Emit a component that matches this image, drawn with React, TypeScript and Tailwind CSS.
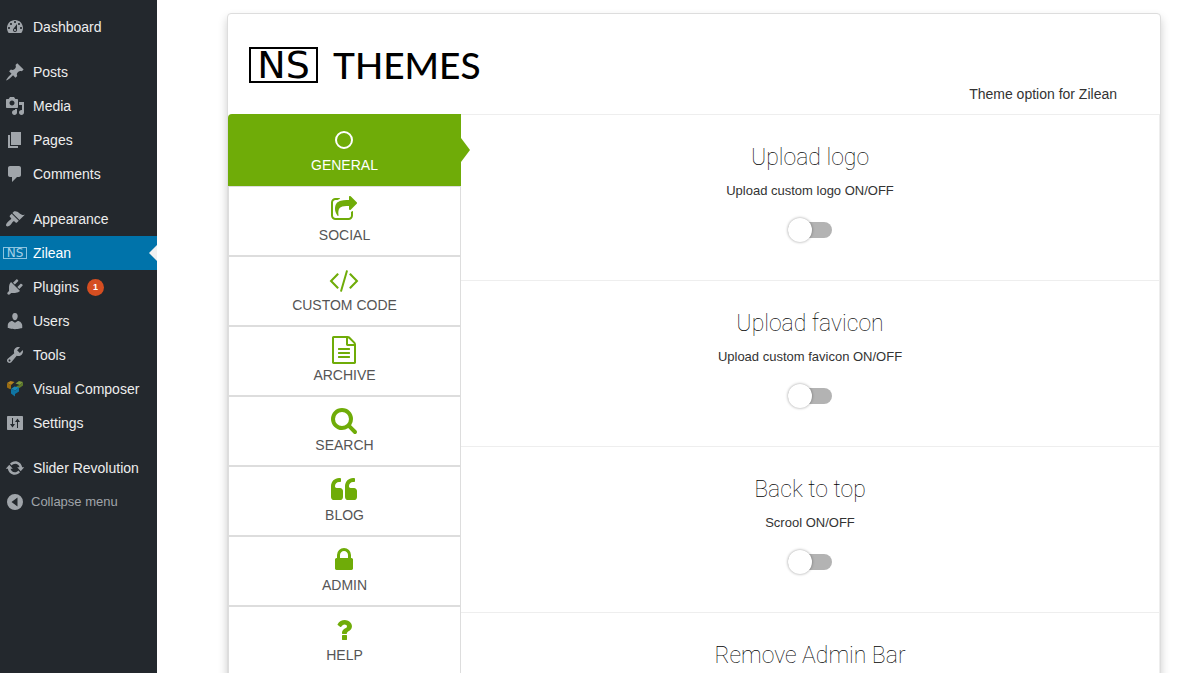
import React, { useState } from 'react';

const sans = "font-['Liberation_Sans',Arial,sans-serif]";

const menuIcons: Record<string, string> = {
  dashboard:
    'M3.76 16h12.48c1.1-1.37 1.76-3.11 1.76-5 0-4.42-3.58-8-8-8s-8 3.58-8 8c0 1.89.66 3.63 1.76 5zM10 4c.55 0 1 .45 1 1s-.45 1-1 1-1-.45-1-1 .45-1 1-1zM6 6c.55 0 1 .45 1 1s-.45 1-1 1-1-.45-1-1 .45-1 1-1zm8 0c.55 0 1 .45 1 1s-.45 1-1 1-1-.45-1-1 .45-1 1-1zm-5.37 5.55L12 7v6c0 1.1-.9 2-2 2s-2-.9-2-2c0-.57.24-1.08.63-1.45zM4 10c.55 0 1 .45 1 1s-.45 1-1 1-1-.45-1-1 .45-1 1-1zm12 0c.55 0 1 .45 1 1s-.45 1-1 1-1-.45-1-1 .45-1 1-1zm-5 3c0-.55-.45-1-1-1s-1 .45-1 1 .45 1 1 1 1-.45 1-1z',
  posts:
    'M10.44 3.02l1.82-1.82 6.36 6.35-1.83 1.82c-1.05-.68-2.48-.57-3.41.36l-.75.75c-.92.93-1.04 2.35-.35 3.41l-1.83 1.82-2.41-2.41-2.8 2.79c-.42.42-3.38 2.71-3.8 2.29s1.86-3.39 2.28-3.81l2.79-2.79L4.1 9.36l1.83-1.82c1.05.69 2.48.57 3.4-.36l.75-.75c.93-.92 1.05-2.35.36-3.41z',
  media:
    'M13 11V4c0-.55-.45-1-1-1h-1.67L9 1H5L3.67 3H2c-.55 0-1 .45-1 1v7c0 .55.45 1 1 1h10c.55 0 1-.45 1-1zM7 4.5c1.38 0 2.5 1.12 2.5 2.5S8.38 9.5 7 9.5 4.5 8.38 4.5 7 5.62 4.5 7 4.5zM14 6h5v10.5c0 1.38-1.12 2.5-2.5 2.5S14 17.88 14 16.5s1.12-2.5 2.5-2.5c.17 0 .34.02.5.05V9h-3V6zm-4 8.05V13h2v3.5c0 1.38-1.12 2.5-2.5 2.5S7 17.88 7 16.5 8.12 14 9.5 14c.17 0 .34.02.5.05z',
  pages: 'M6 15V2h10v13H6zm-1 1h8v2H3V5h2v11z',
  comments: 'M5 2h9c1.1 0 2 .9 2 2v7c0 1.1-.9 2-2 2h-2l-5 5v-5H5c-1.1 0-2-.9-2-2V4c0-1.1.9-2 2-2z',
  appearance:
    'M14.48 11.06L7.41 3.99l1.5-1.5c.5-.56 2.3-.47 3.51.32 1.21.8 1.43 1.28 2.91 2.1 1.18.64 2.45 1.26 4.45.85zm-.71.71L6.7 4.7 4.93 6.47c-.39.39-.39 1.02 0 1.41l1.06 1.06c.39.39.39 1.03 0 1.42-.6.6-1.43 1.11-2.21 1.69-.35.26-.7.53-1.01.84C1.43 14.23.4 16.08 1.4 17.07c.99 1 2.84-.03 4.18-1.36.31-.31.58-.66.85-1.02.57-.78 1.08-1.61 1.69-2.21.39-.39 1.02-.39 1.41 0l1.06 1.06c.39.39 1.02.39 1.41 0z',
  plugins:
    'M13.11 4.36L9.87 7.6 8 5.73l3.24-3.24c.35-.34 1.05-.2 1.56.32.52.51.66 1.21.31 1.55zm-8 1.77l.91-1.12 9.01 9.01-1.19.84c-.71.71-2.63 1.16-3.82 1.16H6.14L4.9 17.26c-.59.59-1.54.59-2.12 0-.59-.58-.59-1.53 0-2.12l1.24-1.24v-3.88c0-1.13.4-3.19 1.09-3.89zm7.26 3.97l3.24-3.24c.34-.35 1.04-.21 1.55.31.52.51.66 1.21.31 1.55l-3.24 3.25z',
  users:
    'M10 9.25c-2.27 0-2.73-3.44-2.73-3.44C7 4.02 7.82 2 9.97 2c2.16 0 2.98 2.02 2.71 3.81 0 0-.41 3.44-2.68 3.44zm0 2.57L12.72 10c2.39 0 4.52 2.33 4.52 4.53v2.49s-3.65 1.13-7.24 1.13c-3.65 0-7.24-1.13-7.24-1.13v-2.49c0-2.25 1.94-4.48 4.47-4.48z',
  tools:
    'M16.68 9.77c-1.34 1.34-3.3 1.67-4.95.99l-5.41 6.52c-.99.99-2.59.99-3.58 0s-.99-2.59 0-3.57l6.52-5.42c-.68-1.65-.35-3.61.99-4.95 1.28-1.28 3.12-1.62 4.72-1.06l-2.89 2.89 2.82 2.82 2.86-2.87c.53 1.58.18 3.39-1.08 4.65zM3.81 16.21c.4.39 1.04.39 1.43 0 .4-.4.4-1.04 0-1.43-.39-.4-1.03-.4-1.43 0-.39.39-.39 1.03 0 1.43z',
  settings:
    'M18 16V4c0-.6-.4-1-1-1H3c-.6 0-1 .4-1 1v12c0 .6.4 1 1 1h14c.6 0 1-.4 1-1zM8 11h2l-2.5 3.5L5 11h2V5h1zM13 9v6h-1V9h-2l2.5-3.5L15 9z',
  slider:
    'M10.2 3.28c3.53 0 6.43 2.61 6.92 6h2.08l-3.5 4-3.5-4h2.32c-.45-1.97-2.21-3.45-4.32-3.45-1.45 0-2.73.71-3.54 1.78L4.95 5.66C6.23 4.2 8.11 3.28 10.2 3.28zm-.4 13.44c-3.52 0-6.43-2.61-6.92-6H.8l3.5-4c1.17 1.33 2.33 2.67 3.5 4H5.48c.45 1.97 2.21 3.45 4.32 3.45 1.45 0 2.73-.71 3.54-1.78l1.71 1.95c-1.28 1.46-3.15 2.38-5.25 2.38z',
  collapse: 'M10 2a8 8 0 1 0 0 16 8 8 0 0 0 0-16zM12.5 5.5v9L6.5 10z',
};

const menuGroups = [
  [{ id: 'dashboard', label: 'Dashboard' }],
  [
    { id: 'posts', label: 'Posts' },
    { id: 'media', label: 'Media' },
    { id: 'pages', label: 'Pages' },
    { id: 'comments', label: 'Comments' },
  ],
  [
    { id: 'appearance', label: 'Appearance' },
    { id: 'zilean', label: 'Zilean' },
    { id: 'plugins', label: 'Plugins', count: 1 },
    { id: 'users', label: 'Users' },
    { id: 'tools', label: 'Tools' },
    { id: 'composer', label: 'Visual Composer' },
    { id: 'settings', label: 'Settings' },
  ],
  [{ id: 'slider', label: 'Slider Revolution' }],
];

// Tab icons sit on a 1792 unit grid
const tabs = [
  { label: 'General', icon: 'M896 320a576 576 0 1 0 0 1152 576 576 0 0 0 0-1152zm0 128a448 448 0 1 1 0 896 448 448 0 0 1 0-896z' },
  {
    label: 'Social',
    icon: 'M1472 989v259q0 119-84.5 203.5t-203.5 84.5h-832q-119 0-203.5-84.5t-84.5-203.5v-832q0-119 84.5-203.5t203.5-84.5h255q13 0 22.5 9.5t9.5 22.5q0 27-26 32-77 26-133 60-10 4-16 4h-112q-66 0-113 47t-47 113v832q0 66 47 113t113 47h832q66 0 113-47t47-113v-214q0-19 18-29 28-13 54-37 16-16 35-8 21 9 21 29zm237-496l-384 384q-18 19-45 19-12 0-25-5-39-17-39-59v-192h-160q-323 0-438 131-119 137-74 473 3 23-20 34-8 2-12 2-16 0-26-13-10-14-21-31t-39.5-68.5-49.5-99.5-38.5-114-17.5-122q0-49 3.5-91t14-90 28-88 47-81.5 68.5-74 94.5-61.5 124.5-48.5 159.5-30.5 196.5-11h160v-192q0-42 39-59 13-5 25-5 26 0 45 19l384 384q19 19 19 45t-19 45z',
  },
  {
    label: 'Custom code',
    icon: 'M553 1399l-50 50q-10 10-23 10t-23-10l-466-466q-10-10-10-23t10-23l466-466q10-10 23-10t23 10l50 50q10 10 10 23t-10 23l-393 393 393 393q10 10 10 23t-10 23zm591-1067l-373 1291q-4 13-15.5 19.5t-23.5 2.5l-62-17q-13-4-19.5-15.5t-2.5-24.5l373-1291q4-13 15.5-19.5t23.5-2.5l62 17q13 4 19.5 15.5t2.5 24.5zm657 651l-466 466q-10 10-23 10t-23-10l-50-50q-10-10-10-23t10-23l393-393-393-393q-10-10-10-23t10-23l50-50q10-10 23-10t23 10l466 466q10 10 10 23t-10 23z',
  },
  {
    label: 'Archive',
    icon: 'M1596 380q28 28 48 76t20 88v1152q0 40-28 68t-68 28h-1344q-40 0-68-28t-28-68v-1600q0-40 28-68t68-28h896q40 0 88 20t76 48zm-444-244v376h376q-10-29-22-41l-313-313q-12-12-41-22zm384 1528v-1024h-416q-40 0-68-28t-28-68v-416h-768v1536h1280zm-1024-864q0-14 9-23t23-9h704q14 0 23 9t9 23v64q0 14-9 23t-23 9h-704q-14 0-23-9t-9-23v-64zm736 224q14 0 23 9t9 23v64q0 14-9 23t-23 9h-704q-14 0-23-9t-9-23v-64q0-14 9-23t23-9h704zm0 256q14 0 23 9t9 23v64q0 14-9 23t-23 9h-704q-14 0-23-9t-9-23v-64q0-14 9-23t23-9h704z',
  },
  {
    label: 'Search',
    icon: 'M1216 832q0-185-131.5-316.5t-316.5-131.5-316.5 131.5-131.5 316.5 131.5 316.5 316.5 131.5 316.5-131.5 131.5-316.5zm512 832q0 52-38 90t-90 38q-54 0-90-38l-343-342q-179 124-399 124-143 0-273.5-55.5t-225-150-150-225-55.5-273.5 55.5-273.5 150-225 225-150 273.5-55.5 273.5 55.5 225 150 150 225 55.5 273.5q0 220-124 399l343 343q37 37 37 90z',
  },
  {
    label: 'Blog',
    icon: 'M832 960v384q0 80-56 136t-136 56h-384q-80 0-136-56t-56-136v-704q0-104 40.5-198.5t109.5-163.5 163.5-109.5 198.5-40.5h64q26 0 45 19t19 45v128q0 26-19 45t-45 19h-64q-106 0-181 75t-75 181v32q0 40 28 68t68 28h224q80 0 136 56t56 136zm896 0v384q0 80-56 136t-136 56h-384q-80 0-136-56t-56-136v-704q0-104 40.5-198.5t109.5-163.5 163.5-109.5 198.5-40.5h64q26 0 45 19t19 45v128q0 26-19 45t-45 19h-64q-106 0-181 75t-75 181v32q0 40 28 68t68 28h224q80 0 136 56t56 136z',
  },
  {
    label: 'Admin',
    icon: 'M640 768h512v-192q0-106-75-181t-181-75-181 75-75 181v192zm832 96v576q0 40-28 68t-68 28h-960q-40 0-68-28t-28-68v-576q0-40 28-68t68-28h32v-192q0-184 132-316t316-132 316 132 132 316v192h32q40 0 68 28t28 68z',
  },
  {
    label: 'Help',
    icon: 'M1088 1256v240q0 16-12 28t-28 12h-240q-16 0-28-12t-12-28v-240q0-16 12-28t28-12h240q16 0 28 12t12 28zm316-600q0 54-15.5 101t-35 76.5-55 59.5-57.5 43.5-61 35.5q-41 23-68.5 65t-27.5 67q0 17-12 32.5t-28 15.5h-240q-15 0-25.5-18.5t-10.5-37.5v-45q0-83 65-156.5t143-108.5q59-27 84-56t25-76q0-42-46.5-74t-107.5-32q-65 0-108 29-35 25-107 115-13 16-31 16-12 0-25-8l-164-125q-13-10-15.5-25t5.5-28q160-266 464-266 80 0 161 31t146 83 106 127.5 41 158.5z',
  },
];

const options = [
  { id: 'logo', title: 'Upload logo', text: 'Upload custom logo ON/OFF' },
  { id: 'favicon', title: 'Upload favicon', text: 'Upload custom favicon ON/OFF' },
  { id: 'top', title: 'Back to top', text: 'Scrool ON/OFF' },
  { id: 'adminbar', title: 'Remove Admin Bar' },
];

function MenuIcon({ id }: { id: string }) {
  if (id === 'zilean') {
    return (
      <span
        aria-hidden="true"
        className="flex h-3 w-6 shrink-0 items-center justify-center border border-[#8cc4e0] font-['DejaVu_Sans',sans-serif] text-[12px] leading-none text-[#a5d0e6]"
      >
        NS
      </span>
    );
  }
  if (id === 'composer') {
    return (
      <svg viewBox="0 0 20 20" className="size-5 shrink-0">
        <path d="M2 4l3.500-2 4 1-3.500 3z" fill="#b5831f" />
        <path d="M2 4l4 2v3.500l-.8.800L2 8.500z" fill="#9a6c12" />
        <path d="M10.500 4.500l3.500-2.500 4 1-3 3z" fill="#7b963c" />
        <path d="M18 3v3.500l-3.500 2.500-3-.5V7L15 6z" fill="#5d7a2c" />
        <path d="M6 10l3.500-2.500 4.500 1-3.500 3z" fill="#1b88b5" />
        <path d="M6 10l4.500 1.500L14 8.500v4l-4 2.500v2.500l-4-3z" fill="#0f75a3" />
      </svg>
    );
  }
  return (
    <svg viewBox="0 0 20 20" className="size-5 shrink-0 fill-[#a0a5aa]" fillRule="evenodd">
      <path d={menuIcons[id]} />
    </svg>
  );
}

function Sidebar() {
  return (
    <nav className="w-[157px] shrink-0 bg-[#23282d] pt-2.5 text-sm text-[#eeeeee]">
      <div className="flex flex-col gap-[11px]">
        {menuGroups.map((group) => (
          <ul key={group[0].id}>
            {group.map((item) => {
              const current = item.id === 'zilean';
              return (
                <li key={item.id}>
                  <a
                    href={`#${item.id}`}
                    className={`relative flex h-[34px] items-center gap-2 pl-[5px] ${current ? 'bg-[#0073aa] text-white' : ''}`}
                  >
                    <span className="flex w-5 shrink-0 justify-center">
                      <MenuIcon id={item.id} />
                    </span>
                    <span className="whitespace-nowrap">{item.label}</span>
                    {'count' in item && (
                      <span className="flex size-[17px] items-center justify-center rounded-full bg-[#d54e21] text-[9px] font-bold text-white">
                        {item.count}
                      </span>
                    )}
                    {current && (
                      <span className="absolute top-1/2 right-0 -translate-y-1/2 border-8 border-transparent border-r-[#f1f1f1] border-l-0" />
                    )}
                  </a>
                </li>
              );
            })}
          </ul>
        ))}
      </div>
      <button type="button" className="flex h-[34px] items-center gap-1.5 pl-[5px] text-[13px] text-[#a0a5aa]">
        <MenuIcon id="collapse" />
        Collapse menu
      </button>
    </nav>
  );
}

function App() {
  const [activeTab, setActiveTab] = useState('General');
  const [enabled, setEnabled] = useState<string[]>([]);

  const toggle = (id: string) => {
    setEnabled(enabled.includes(id) ? enabled.filter((e) => e !== id) : [...enabled, id]);
  };

  return (
    <div className={`flex h-screen overflow-hidden bg-white ${sans}`}>
      <Sidebar />

      <main className="min-w-0 flex-1 pt-[13px] pr-[18px] pl-[70px]">
        <div className="rounded border border-[#dddddd] bg-white shadow-[0_5px_10px_rgba(0,0,0,0.2)]">
          <header className="flex items-end justify-between pt-[33px] pr-[43px] pb-2.5 pl-[21px]">
            <h1 className="mb-[21px] flex h-9 items-center gap-[15px] text-4xl leading-9 text-black">
              <span className="flex h-9 w-[69px] items-center justify-center border-2 border-black font-['DejaVu_Sans',sans-serif] text-[38px]">
                NS
              </span>
              <span className="font-['Lato',sans-serif] text-[37px] font-medium">THEMES</span>
            </h1>
            <p className="text-sm text-[#333333]">Theme option for Zilean</p>
          </header>

          <div className="flex">
            <div className="w-[233px] shrink-0">
              {tabs.map((tab) => {
                const active = tab.label === activeTab;
                return (
                  <button
                    key={tab.label}
                    type="button"
                    onClick={() => setActiveTab(tab.label)}
                    className={`relative flex w-full flex-col items-center gap-px text-sm uppercase ${
                      active
                        ? 'h-[72px] rounded-tl bg-[#6fac08] pt-3 text-white'
                        : 'h-[70px] border border-[#dddddd] pt-[9px] text-[#555555]'
                    }`}
                  >
                    <svg
                      viewBox="0 0 1792 1792"
                      className={`mr-px size-7 overflow-visible ${active ? 'fill-white' : 'fill-[#6fac08]'}`}
                    >
                      <path d={tab.icon} />
                    </svg>
                    <span>{tab.label}</span>
                    {active && (
                      <span className="absolute top-6 left-full border-y-12 border-l-9 border-y-transparent border-l-[#6fac08]" />
                    )}
                  </button>
                );
              })}
            </div>

            <div className="flex-1 border-t border-r border-[#eeeeee]">
              {options.map((option) => (
                <section
                  key={option.id}
                  className="flex flex-col items-center border-b border-[#eeeeee] pt-[27px] pb-[42px]"
                >
                  <h2 id={`${option.id}-title`} className="font-['Roboto',sans-serif] text-[23px] leading-8 font-thin text-black">
                    {option.title}
                  </h2>
                  {option.text && (
                    <label htmlFor={option.id} className="mt-[7px] text-[13px] leading-5 text-[#333333]">
                      {option.text}
                    </label>
                  )}
                  <input
                    id={option.id}
                    type="checkbox"
                    aria-labelledby={`${option.id}-title`}
                    checked={enabled.includes(option.id)}
                    onChange={() => toggle(option.id)}
                    className="mt-[21px] flex h-4 w-11 appearance-none items-center rounded-full bg-[#b3b3b3] before:size-6 before:shrink-0 before:rounded-full before:bg-white before:shadow-[0_0_3px_rgba(0,0,0,0.4)] checked:justify-end checked:bg-[#6fac08]"
                  />
                </section>
              ))}
            </div>
          </div>
        </div>
      </main>
    </div>
  );
}

export default App;
